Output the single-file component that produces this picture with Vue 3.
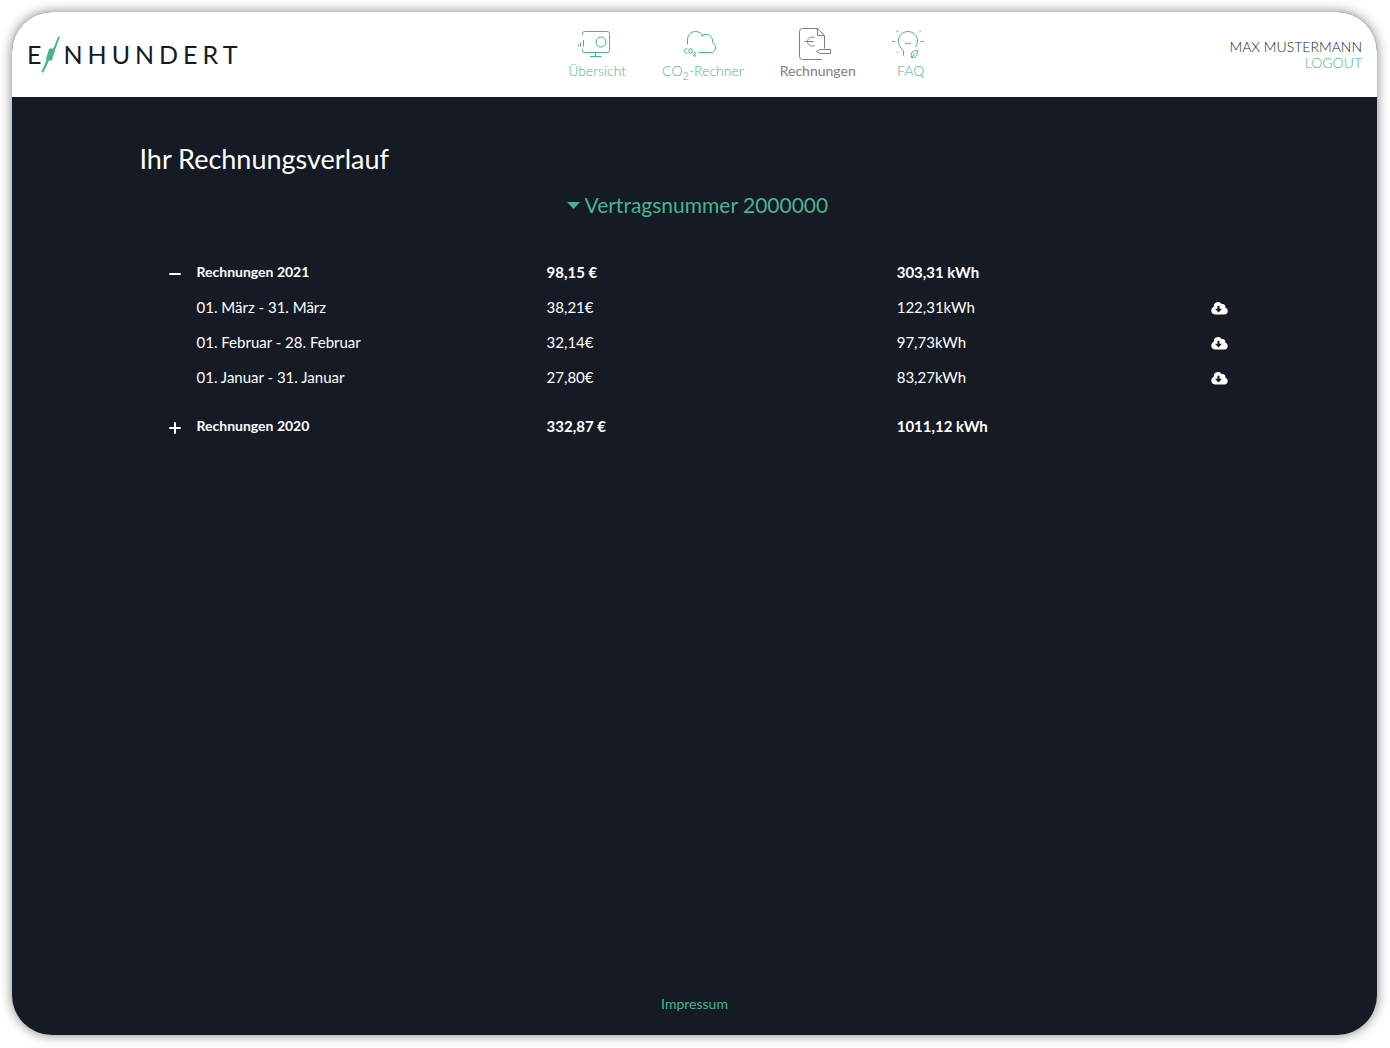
<script setup>
import { ref } from 'vue'

const contract = ref('2000000')
const contracts = ['2000000']

const years = ref([
  {
    year: 2021,
    cost: '98,15 €',
    energy: '303,31 kWh',
    open: true,
    bills: [
      { period: '01. März - 31. März', cost: '38,21€', energy: '122,31kWh' },
      { period: '01. Februar - 28. Februar', cost: '32,14€', energy: '97,73kWh' },
      { period: '01. Januar - 31. Januar', cost: '27,80€', energy: '83,27kWh' }
    ]
  },
  { year: 2020, cost: '332,87 €', energy: '1011,12 kWh', open: false, bills: [] }
])
</script>

<template>
  <div class="card">
    <header class="header">
      <a class="logo" href="#" aria-label="Einhundert">
        <span>E</span>
        <svg class="bolt" width="20" height="38" viewBox="0 0 20 38" aria-hidden="true">
          <path d="M17.400.2 19 .8 14.800 12 10.800 24.500H8L2.200 36.800.4 36 5.800 23.500H4.600L8.300 12.500H12.300z" fill="#4bb38d" />
        </svg>
        <span class="word">NHUNDERT</span>
      </a>

      <nav class="nav">
        <a href="#">
          <svg width="32" height="32" viewBox="0 0 32 32" aria-hidden="true">
            <path d="M4.500 7V5.500Q4.500 3.500 6.500 3.500H29.500Q31.500 3.500 31.500 5.500V22.500Q31.500 24.500 29.500 24.500H6.500Q4.500 24.500 4.500 22.500V21M17.500 24.500V28.500M12 28.500H23.500M.5 16.500V18.500M2.500 14.500V18.500M5.500 12V18.500" />
            <circle cx="23" cy="14" r="5" />
          </svg>
          <span>Übersicht</span>
        </a>
        <a href="#">
          <svg width="32" height="32" viewBox="0 0 32 32" aria-hidden="true">
            <path d="M3.500 16.500V13C3 7 7 3.500 11.500 3.500C15 3.500 18 5.500 19 8.500M17 8.500C20 5 28 6 28.500 12V14M28.500 14.500C33 17 32.500 23.500 27.500 24.500H14.500" />
            <path d="M3.600 21.300C2.700 19.800.6 20.500.6 23S2.700 26 3.600 24.700" />
            <ellipse cx="6.600" cy="23" rx="1.800" ry="2.500" />
            <path d="M9.500 25Q11.500 23.600 11.500 25Q11.500 26 9.500 27.900H12" />
          </svg>
          <span>CO<sub>2</sub>-Rechner</span>
        </a>
        <a class="active" href="#" aria-current="page">
          <svg width="32" height="32" viewBox="0 0 32 32" aria-hidden="true">
            <path d="M23 31.500H3.500Q.5 31.500.5 28.500V3.500Q.5.500 3.500.500H18.500L25.500 7.500V20.500M18.500.500V7.500H25.500" />
            <path d="M15.500 9.500C11 8 8.500 11 8.500 13.500S11 19.500 15.500 17.500M5.500 13.500H14.500M21 21.500H31.500V25.500H21L17.500 23.500z" />
          </svg>
          <span>Rechnungen</span>
        </a>
        <a href="#">
          <svg width="32" height="32" viewBox="0 0 32 32" aria-hidden="true">
            <path d="M11.500 27.500V24C11.500 21.500 7 19.500 6.500 13.500C6 7.500 11 3.500 16 3.500S26 7.500 25.500 13.500C25.400 15.600 24.500 17.500 23.300 19M13 15.500Q14 14.500 15 15.500T17 15.500T19 15.500M0 13.500H3M28.500 13.500H32M4.500 2.500 6 4M27.500 4 29 2.500M4.500 25 6 23.500M25.500 22.500C20.500 22.500 18.500 24.500 19.500 29.500C24.500 29.500 25.500 28 25.500 22.500M19.500 29.500 23 25.500" />
          </svg>
          <span>FAQ</span>
        </a>
      </nav>

      <div class="account">
        <span>MAX MUSTERMANN</span>
        <a href="#">LOGOUT</a>
      </div>
    </header>

    <main class="main">
      <h1>Ihr Rechnungsverlauf</h1>

      <label class="contract">
        <svg width="13" height="7" viewBox="0 0 13 7" aria-hidden="true"><path d="M0 0H13L6.500 7z" fill="currentColor" /></svg>
        <select v-model="contract" aria-label="Vertragsnummer">
          <option v-for="c in contracts" :key="c" :value="c">Vertragsnummer {{ c }}</option>
        </select>
      </label>

      <table>
        <colgroup>
          <col class="c-toggle"><col><col><col class="c-energy"><col class="c-load">
        </colgroup>
        <tbody v-for="y in years" :key="y.year">
          <tr class="total">
            <td class="toggle">
              <button type="button" :aria-expanded="y.open" :aria-label="'Rechnungen ' + y.year" @click="y.open = !y.open">
                <svg width="12" height="12" viewBox="0 0 12 12" aria-hidden="true">
                  <path :d="y.open ? 'M1 6H11' : 'M1 6H11M6 1V11'" stroke="#fff" stroke-width="2" stroke-linecap="round" />
                </svg>
              </button>
            </td>
            <th scope="row">Rechnungen {{ y.year }}</th>
            <td>{{ y.cost }}</td>
            <td>{{ y.energy }}</td>
            <td></td>
          </tr>
          <template v-if="y.open">
            <tr v-for="b in y.bills" :key="b.period">
              <td></td>
              <td>{{ b.period }}</td>
              <td>{{ b.cost }}</td>
              <td>{{ b.energy }}</td>
              <td class="load">
                <button type="button" :aria-label="b.period">
                  <svg width="17" height="13" viewBox="0 0 17 13" aria-hidden="true">
                    <path fill="#fff" fill-rule="evenodd" d="M14.200 5.500A2.600 2.600 0 0 0 10.700 2.300A4.200 4.200 0 0 0 2.800 4.800A4 4 0 0 0 3.900 12.500H13.600A3.600 3.600 0 0 0 14.200 5.500M6.500 3.800H8.500V6.800H11L7.500 10.500 4 6.800H6.500z" />
                  </svg>
                </button>
              </td>
            </tr>
          </template>
        </tbody>
      </table>
    </main>

    <footer class="footer"><a href="#">Impressum</a></footer>
  </div>
</template>

<style>
body {
  margin: 0;
  background: #fff;
}
</style>

<style scoped>
.card {
  box-sizing: border-box;
  display: flex;
  flex-direction: column;
  min-height: calc(100vh - 25px);
  margin: 12px 13px 13px 12px;
  border-radius: 40px;
  overflow: hidden;
  background: #161a25;
  box-shadow: 0 0 12px rgba(0, 0, 0, 0.5);
  color: #fff;
  font: 15px/20px Lato, "Liberation Sans", sans-serif;
}
a {
  color: #4bb38d;
  text-decoration: none;
}
.header {
  display: flex;
  justify-content: space-between;
  align-items: center;
  box-sizing: border-box;
  height: 85px;
  padding: 0 15px;
  background: #fff;
  font-size: 14px;
}
.logo {
  display: flex;
  align-items: center;
  color: #161a25;
  font-size: 25px;
  line-height: 36px;
}
.logo span {
  padding-bottom: 2px;
}
.logo .word {
  margin-left: 2px;
  letter-spacing: 5px;
}
.nav {
  display: flex;
  gap: 36px;
  padding-left: 26px;
}
.nav a {
  display: flex;
  flex-direction: column;
  align-items: center;
  font-weight: 300;
  line-height: 21px;
}
.nav svg {
  margin-right: 6px;
  fill: none;
  stroke: currentColor;
}
.nav .active {
  color: #7c7e84;
  font-weight: 400;
}
sub {
  font-size: 11px;
  line-height: 0;
}
.account {
  display: flex;
  flex-direction: column;
  align-items: flex-end;
  color: #161a25;
  font-weight: 300;
  line-height: 16px;
}
.main {
  flex: 1;
  box-sizing: border-box;
  width: 100%;
  max-width: 1140px;
  margin: 0 auto;
  padding: 42px 15px 0;
}
h1 {
  margin: 0;
  font-size: 27px;
  font-weight: 400;
  line-height: 40px;
}
.contract {
  display: flex;
  justify-content: center;
  align-items: center;
  gap: 5px;
  margin: 11px 0 34px;
  padding-left: 7px;
  color: #4bb38d;
}
select {
  appearance: none;
  padding: 0;
  border: 0;
  background: none;
  color: inherit;
  font: 400 21px/30px Lato, "Liberation Sans", sans-serif;
}
table {
  width: 100%;
  table-layout: fixed;
  border-collapse: collapse;
}
.c-toggle {
  width: 57px;
}
.c-energy {
  width: 28%;
}
.c-load {
  width: 42px;
}
td,
th {
  height: 35px;
  padding: 0;
  text-align: left;
}
th {
  font-size: 14px;
}
.total {
  font-weight: 700;
}
tbody + tbody .total > * {
  padding-top: 14px;
}
.load {
  padding-right: 22px;
  text-align: right;
}
.toggle {
  text-align: center;
}
button {
  padding: 0;
  border: 0;
  background: none;
  vertical-align: middle;
  cursor: pointer;
}
button svg {
  display: block;
}
.toggle button {
  margin-left: 14px;
}
.footer {
  padding: 0 0 21px;
  text-align: center;
  font-size: 14px;
}
</style>
